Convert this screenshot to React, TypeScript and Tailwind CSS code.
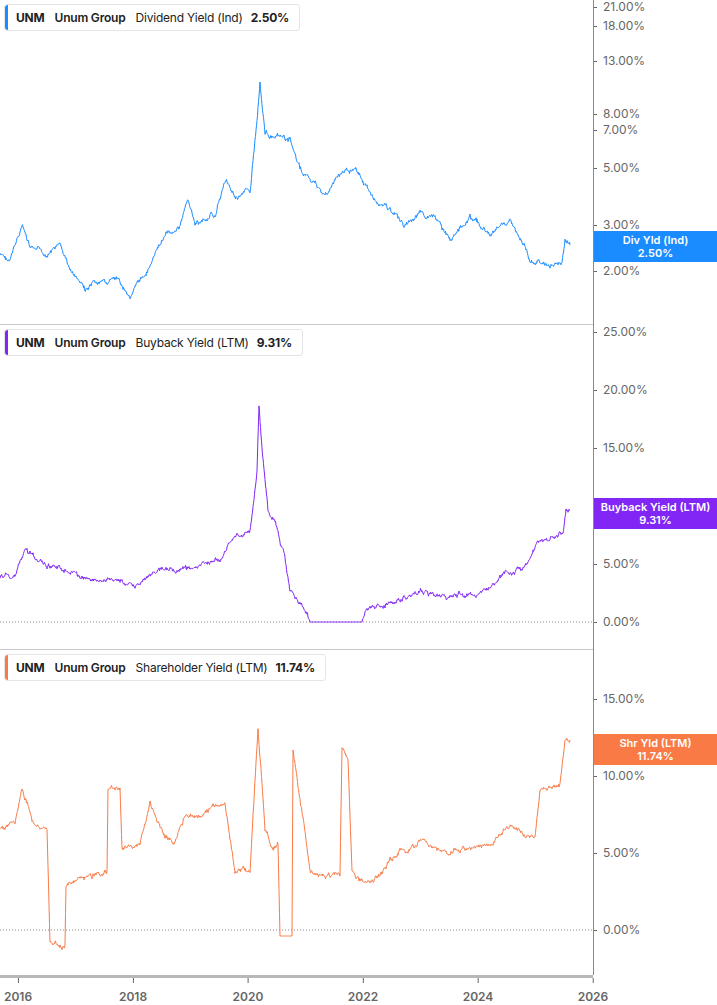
type P = [number, number];

const p1: P[] = [[0,255],[10,262],[22,225],[30,250],[45,255],[60,245],[70,270],[85,290],[100,285],[115,280],[130,295],[145,275],[155,255],[165,235],[180,225],[188,200],[195,225],[215,215],[225,180],[235,195],[250,190],[257,120],[260,80],[265,130],[275,140],[290,140],[300,170],[310,180],[325,195],[340,175],[355,165],[365,185],[375,200],[390,210],[405,225],[420,215],[435,220],[450,240],[470,215],[490,235],[510,220],[520,240],[530,260],[545,265],[555,265],[562,262],[565,240],[570,245]];
const p2: P[] = [[0,577],[15,575],[25,545],[35,560],[50,565],[65,570],[80,578],[110,578],[135,585],[150,572],[180,570],[220,560],[235,535],[250,530],[257,470],[259,405],[262,450],[268,510],[275,520],[285,560],[290,590],[300,600],[310,622],[362,622],[365,612],[380,603],[400,598],[430,593],[450,597],[470,597],[490,590],[510,572],[525,567],[540,540],[555,535],[563,530],[566,507],[570,510]];
const p3: P[] = [[0,828],[15,820],[22,790],[35,825],[47,835],[50,945],[65,945],[66,882],[80,878],[107,872],[108,790],[120,790],[122,850],[140,845],[150,805],[165,835],[175,840],[185,815],[200,815],[225,800],[235,870],[250,872],[258,730],[265,830],[273,850],[278,845],[280,936],[292,936],[293,750],[300,800],[310,870],[325,880],[340,875],[342,745],[348,760],[352,875],[365,880],[380,875],[400,850],[420,840],[450,852],[470,845],[490,845],[510,825],[535,835],[540,790],[560,785],[565,735],[570,740]];

function build(pts: P[], top: number, seed: number, amp: number, flat?: [number, number]) {
  let s = seed;
  const rnd = () => { s = (s * 9301 + 49297) % 233280; return s / 233280 - 0.5; };
  const out: string[] = [];
  let walk = 0;
  for (let i = 0; i < pts.length - 1; i++) {
    const [x0, y0] = pts[i], [x1, y1] = pts[i + 1];
    const steps = Math.max(1, Math.round((x1 - x0) * 2));
    for (let k = 0; k < steps; k++) {
      const t = k / steps;
      const x = x0 + (x1 - x0) * t;
      let y = y0 + (y1 - y0) * t;
      const isFlat = flat && x >= flat[0] && x <= flat[1];
      walk = walk * 0.9 + rnd() * amp;
      if (!isFlat && x1 - x0 > 1) y += walk + rnd() * 2;
      out.push(`${x.toFixed(1)},${(y - top).toFixed(1)}`);
    }
  }
  const l = pts[pts.length - 1];
  out.push(`${l[0]},${l[1] - top}`);
  return out.join(" ");
}

type Tick = { y: number; t: string };

function Panel(props: {
  top: number; pts: P[]; color: string; seed: number; flat?: [number, number];
  name: string; value: string; ticks: Tick[]; zero?: number; label: string; labelY: number; last?: boolean;
}) {
  const { top } = props;
  return (
    <div className="flex h-[325px]">
      <div className={`relative w-[593px] ${props.last ? "" : "border-b border-[#c8c8c8]"}`}>
        <svg className="absolute inset-0" width="593" height="325">
          {props.zero !== undefined && (
            <line x1="0" x2="593" y1={props.zero - top} y2={props.zero - top} stroke="#888" strokeWidth="1" strokeDasharray="1 2" />
          )}
          <polyline points={build(props.pts, top, props.seed, 3.2, props.flat)} fill="none" stroke={props.color} strokeWidth="1" strokeLinejoin="round" />
        </svg>
        <div className="absolute left-[4px] top-[4px] flex items-center h-[27px] bg-white border border-[#e5e5e5] rounded-[3px] pr-[10px] text-[12px] tracking-[-0.2px] text-[#222]">
          <div className="w-[3px] h-full rounded-l-[3px]" style={{ background: props.color }} />
          <span className="ml-[8px] font-bold">UNM</span>
          <span className="ml-[10px] font-semibold">Unum Group</span>
          <span className="ml-[10px]">{props.name}</span>
          <span className="ml-[8px] font-bold">{props.value}</span>
        </div>
      </div>
      <div className="relative flex-1 border-l border-[#8a8a8a]">
        {props.ticks.map((k) => (
          <div key={k.t} className="absolute left-0 flex items-center -translate-y-1/2 text-[12px] text-[#666]" style={{ top: k.y - top }}>
            <span className="w-[3px] h-[1px] bg-[#666] mr-[6px]" />
            {k.t}
          </div>
        ))}
        <div className="absolute left-0 right-0 h-[31px] flex flex-col items-center justify-center text-white text-[11px] font-semibold leading-[13px]" style={{ top: props.labelY - top, background: props.color }}>
          <span>{props.label}</span>
          <span>{props.value}</span>
        </div>
      </div>
    </div>
  );
}

export default function App() {
  return (
    <div className="w-[717px] h-[1005px] bg-white overflow-hidden" style={{ fontFamily: "Inter, 'Liberation Sans', sans-serif" }}>
      <Panel top={0} pts={p1} color="#1a8cff" seed={7} name="Dividend Yield (Ind)" value="2.50%" label="Div Yld (Ind)" labelY={231}
        ticks={[{y:7,t:"21.00%"},{y:26,t:"18.00%"},{y:61,t:"13.00%"},{y:114,t:"8.00%"},{y:130,t:"7.00%"},{y:168,t:"5.00%"},{y:225,t:"3.00%"},{y:271,t:"2.00%"}]} />
      <Panel top={325} pts={p2} color="#8126f5" seed={11} flat={[310,362]} zero={622} name="Buyback Yield (LTM)" value="9.31%" label="Buyback Yield (LTM)" labelY={498}
        ticks={[{y:332,t:"25.00%"},{y:390,t:"20.00%"},{y:448,t:"15.00%"},{y:564,t:"5.00%"},{y:622,t:"0.00%"}]} />
      <Panel top={650} pts={p3} color="#fa7a45" seed={23} flat={[279,293]} zero={930} last name="Shareholder Yield (LTM)" value="11.74%" label="Shr Yld (LTM)" labelY={734}
        ticks={[{y:699,t:"15.00%"},{y:776,t:"10.00%"},{y:853,t:"5.00%"},{y:930,t:"0.00%"}]} />
      <div className="flex">
        <div className="relative w-[593px] h-[30px] border-t-[3px] border-[#b8b8b8]">
          {["2016","2018","2020","2022","2024","2026"].map((y, i) => (
            <div key={y} className="absolute top-0 flex flex-col items-center -translate-x-1/2" style={{ left: 18 + i * 115 }}>
              <span className="w-px h-[5px] bg-[#666]" />
              <span className="mt-[5px] text-[12px] font-semibold text-[#666]">{y}</span>
            </div>
          ))}
        </div>
        <div className="flex-1 border-l border-[#8a8a8a] h-0" />
      </div>
    </div>
  );
}
